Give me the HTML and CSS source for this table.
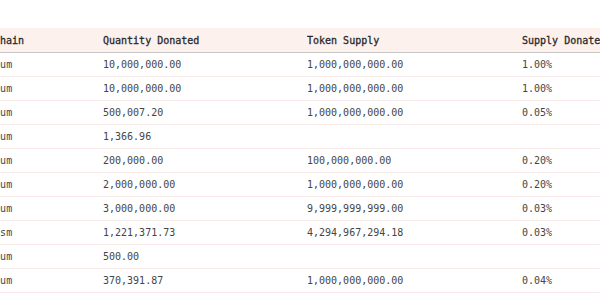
FILE: index.html
```html
<!DOCTYPE html>
<html>
<head>
<meta charset="utf-8">
<link rel="stylesheet" href="styles.css">
</head>
<body>
<div class="viewport">
  <table class="donations">
    <colgroup>
      <col class="c-chain"><col class="c-qty"><col class="c-supply"><col class="c-pct">
    </colgroup>
    <thead>
      <tr>
        <th class="chain-head">Chain</th>
        <th>Quantity Donated</th>
        <th>Token Supply</th>
        <th>Supply Donated</th>
      </tr>
    </thead>
    <tbody>
      <tr><td class="chain">Ethereum</td><td>10,000,000.00</td><td>1,000,000,000.00</td><td>1.00%</td></tr>
      <tr><td class="chain">Ethereum</td><td>10,000,000.00</td><td>1,000,000,000.00</td><td>1.00%</td></tr>
      <tr><td class="chain">Ethereum</td><td>500,007.20</td><td>1,000,000,000.00</td><td>0.05%</td></tr>
      <tr><td class="chain">Ethereum</td><td>1,366.96</td><td></td><td></td></tr>
      <tr><td class="chain">Ethereum</td><td>200,000.00</td><td>100,000,000.00</td><td>0.20%</td></tr>
      <tr><td class="chain">Ethereum</td><td>2,000,000.00</td><td>1,000,000,000.00</td><td>0.20%</td></tr>
      <tr><td class="chain">Ethereum</td><td>3,000,000.00</td><td>9,999,999,999.00</td><td>0.03%</td></tr>
      <tr><td class="chain">Optimism</td><td>1,221,371.73</td><td>4,294,967,294.18</td><td>0.03%</td></tr>
      <tr><td class="chain">Ethereum</td><td>500.00</td><td></td><td></td></tr>
      <tr><td class="chain">Ethereum</td><td>370,391.87</td><td>1,000,000,000.00</td><td>0.04%</td></tr>
    </tbody>
  </table>
</div>
</body>
</html>
```

FILE: styles.css
```css
html, body {
  margin: 0;
  padding: 0;
  background: #ffffff;
}

.viewport {
  width: 600px;
  height: 300px;
  overflow: hidden;
  padding-top: 28px;
  box-sizing: border-box;
}

.donations {
  margin-left: -48px;
  border-collapse: collapse;
  table-layout: fixed;
  width: 760px;
  font-family: "DejaVu Sans Mono", "Liberation Mono", monospace;
  font-size: 10px;
  color: #3c3c3c;
}

.c-chain { width: 151px; }
.c-qty { width: 204px; }
.c-supply { width: 215px; }
.c-pct { width: 190px; }

.donations th,
.donations td {
  text-align: left;
  padding: 0;
  white-space: nowrap;
  overflow: hidden;
}

.donations thead tr {
  background: #fdf1ee;
  height: 24px;
  border-bottom: 1px solid #c6c6c6;
}

.donations th {
  font-weight: normal;
  -webkit-text-stroke: 0.3px #2a2a2a;
  color: #2a2a2a;
  height: 24px;
  vertical-align: middle;
}

.donations th.chain-head {
  padding-left: 42px;
}

.donations td.chain {
  padding-left: 12px;
}

.donations tbody tr {
  height: 24px;
  border-bottom: 1px solid #f7e9e7;
}

.donations td {
  height: 23px;
  vertical-align: middle;
  color: #454545;
}
```
